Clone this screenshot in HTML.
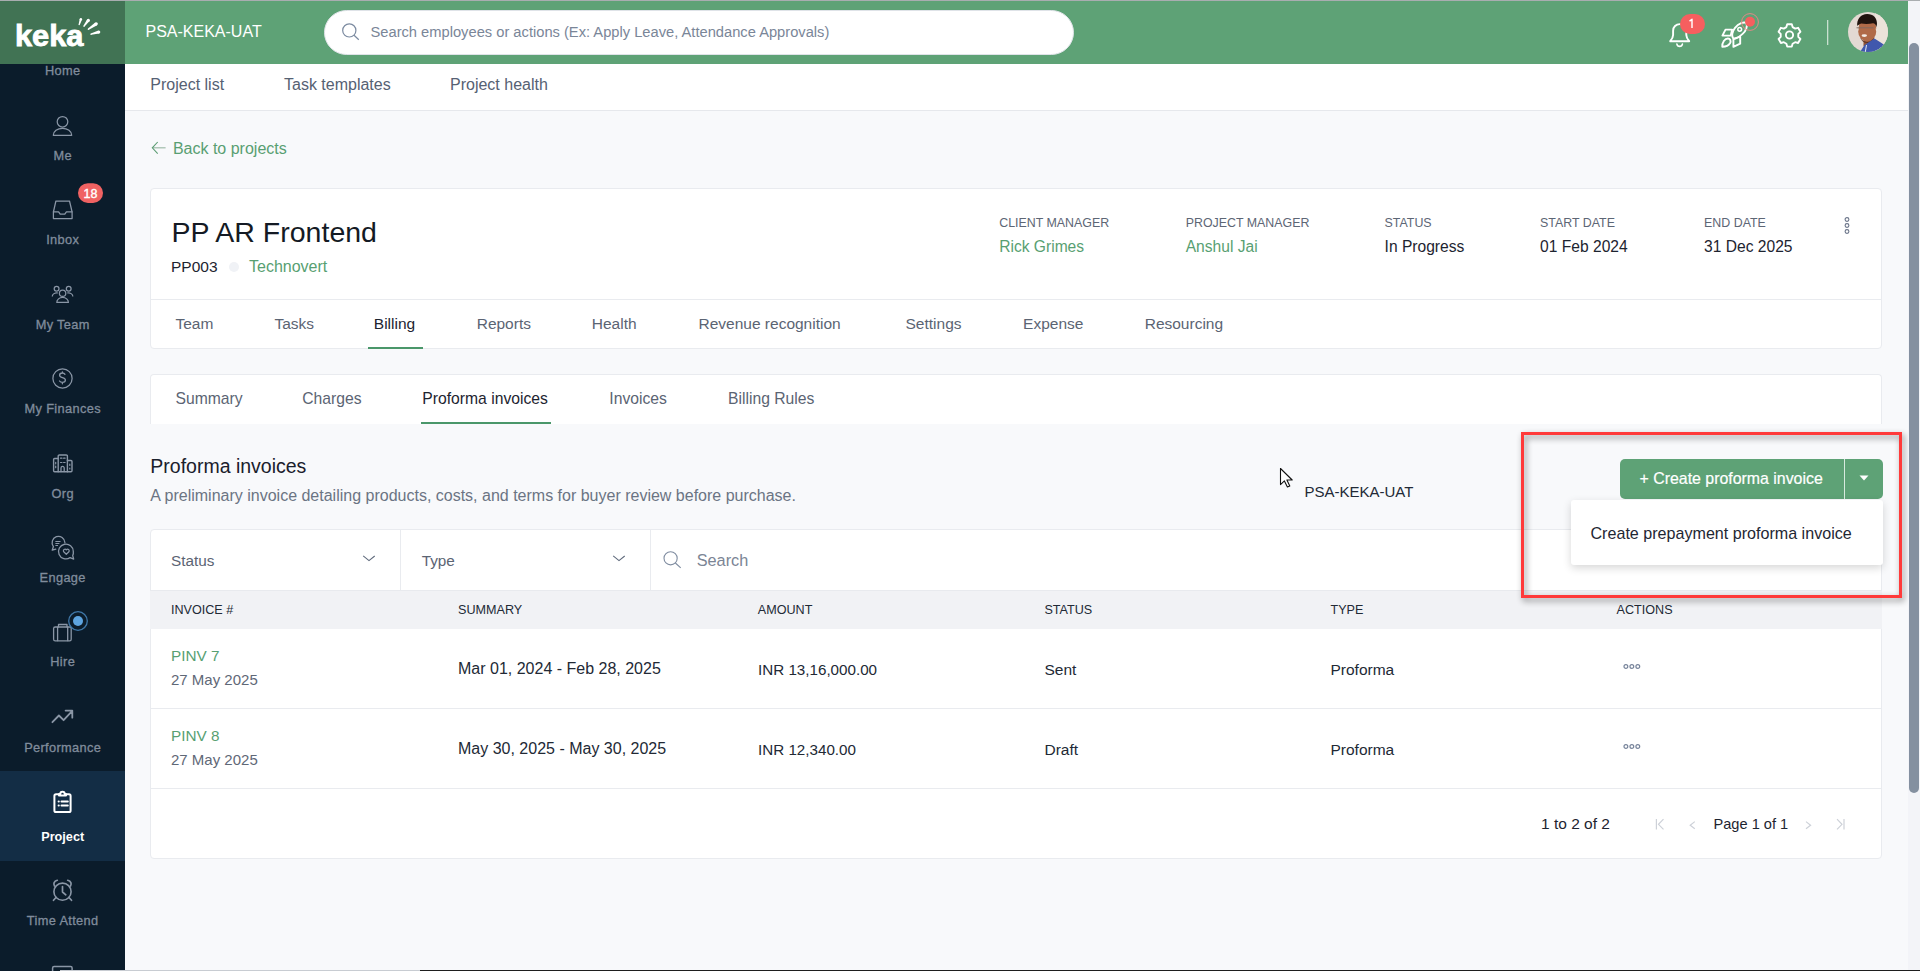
<!DOCTYPE html>
<html><head><meta charset="utf-8"><title>Keka PSA</title>
<style>
html,body{margin:0;padding:0;width:1920px;height:971px;overflow:hidden;background:#f8f9fb;font-family:"Liberation Sans", sans-serif}
.t{position:absolute;white-space:nowrap;font-family:"Liberation Sans", sans-serif}
.b{position:absolute;box-sizing:border-box}
svg.b{overflow:visible}
</style></head><body>
<div class="b" style="left:125px;top:64px;width:1783px;height:907px;background:#f8f9fb"></div>
<div class="b" style="left:125px;top:64px;width:1783px;height:47px;background:#fff;border-bottom:1px solid #e6e8ec"></div>
<span class="t" style="left:150.3px;top:76.90px;font-size:16px;line-height:16px;color:#566173;font-weight:400;">Project list</span>
<span class="t" style="left:284.0px;top:76.90px;font-size:16px;line-height:16px;color:#566173;font-weight:400;">Task templates</span>
<span class="t" style="left:450.0px;top:76.90px;font-size:16px;line-height:16px;color:#566173;font-weight:400;">Project health</span>
<svg class="b" style="left:150px;top:140px" width="18" height="16" viewBox="0 0 18 16"><path d="M15.6 7.8H3" fill="none" stroke="#9fbcaa" stroke-width="1.2"/><path d="M7.7 2L2.3 7.8l5.4 5.8" fill="none" stroke="#5b9c72" stroke-width="1.1"/></svg>
<span class="t" style="left:172.9px;top:140.70px;font-size:16px;line-height:16px;color:#589f72;font-weight:400;">Back to projects</span>
<div class="b" style="left:150px;top:188px;width:1732px;height:161px;background:#fff;border:1px solid #e9ebef;border-radius:4px"></div>
<div class="b" style="left:151px;top:299px;width:1730px;height:1px;background:#e9ebef"></div>
<span class="t" style="left:171.5px;top:217.88px;font-size:28.5px;line-height:28.5px;color:#141a24;font-weight:400;">PP AR Frontend</span>
<span class="t" style="left:171.0px;top:259.12px;font-size:15.5px;line-height:15.5px;color:#1d2430;font-weight:400;">PP003</span>
<div class="b" style="left:229px;top:261.5px;width:10px;height:10px;background:#f0f2f6;border-radius:50%"></div>
<span class="t" style="left:249.0px;top:258.70px;font-size:16px;line-height:16px;color:#589f72;font-weight:400;">Technovert</span>
<span class="t" style="left:999.2px;top:216.66px;font-size:12.4px;line-height:12.4px;color:#5d6675;font-weight:400;">CLIENT MANAGER</span>
<span class="t" style="left:999.2px;top:238.74px;font-size:15.6px;line-height:15.6px;color:#589f72;font-weight:400;">Rick Grimes</span>
<span class="t" style="left:1185.7px;top:216.66px;font-size:12.4px;line-height:12.4px;color:#5d6675;font-weight:400;">PROJECT MANAGER</span>
<span class="t" style="left:1185.7px;top:238.74px;font-size:15.6px;line-height:15.6px;color:#589f72;font-weight:400;">Anshul Jai</span>
<span class="t" style="left:1384.6px;top:216.66px;font-size:12.4px;line-height:12.4px;color:#5d6675;font-weight:400;">STATUS</span>
<span class="t" style="left:1384.6px;top:238.74px;font-size:15.6px;line-height:15.6px;color:#1d2430;font-weight:400;">In Progress</span>
<span class="t" style="left:1540.1px;top:216.66px;font-size:12.4px;line-height:12.4px;color:#5d6675;font-weight:400;">START DATE</span>
<span class="t" style="left:1540.1px;top:238.74px;font-size:15.6px;line-height:15.6px;color:#1d2430;font-weight:400;">01 Feb 2024</span>
<span class="t" style="left:1704.1px;top:216.66px;font-size:12.4px;line-height:12.4px;color:#5d6675;font-weight:400;">END DATE</span>
<span class="t" style="left:1704.1px;top:238.74px;font-size:15.6px;line-height:15.6px;color:#1d2430;font-weight:400;">31 Dec 2025</span>
<svg class="b" style="left:1842px;top:216px" width="10" height="20" viewBox="0 0 10 20"><circle cx="5" cy="3.5" r="1.9" fill="none" stroke="#6a7489" stroke-width="1.1"/><circle cx="5" cy="9.5" r="1.9" fill="none" stroke="#6a7489" stroke-width="1.1"/><circle cx="5" cy="15.5" r="1.9" fill="none" stroke="#6a7489" stroke-width="1.1"/></svg>
<span class="t" style="left:175.5px;top:315.72px;font-size:15.5px;line-height:15.5px;color:#5b6473;font-weight:400;">Team</span>
<span class="t" style="left:274.5px;top:315.72px;font-size:15.5px;line-height:15.5px;color:#5b6473;font-weight:400;">Tasks</span>
<span class="t" style="left:373.8px;top:315.72px;font-size:15.5px;line-height:15.5px;color:#1d2430;font-weight:400;">Billing</span>
<span class="t" style="left:476.7px;top:315.72px;font-size:15.5px;line-height:15.5px;color:#5b6473;font-weight:400;">Reports</span>
<span class="t" style="left:591.8px;top:315.72px;font-size:15.5px;line-height:15.5px;color:#5b6473;font-weight:400;">Health</span>
<span class="t" style="left:698.5px;top:315.72px;font-size:15.5px;line-height:15.5px;color:#5b6473;font-weight:400;">Revenue recognition</span>
<span class="t" style="left:905.5px;top:315.72px;font-size:15.5px;line-height:15.5px;color:#5b6473;font-weight:400;">Settings</span>
<span class="t" style="left:1023.1px;top:315.72px;font-size:15.5px;line-height:15.5px;color:#5b6473;font-weight:400;">Expense</span>
<span class="t" style="left:1144.7px;top:315.72px;font-size:15.5px;line-height:15.5px;color:#5b6473;font-weight:400;">Resourcing</span>
<div class="b" style="left:368px;top:347px;width:55px;height:2px;background:#4a976a"></div>
<div class="b" style="left:150px;top:374px;width:1732px;height:50px;background:#fff;border:1px solid #e9ebef;border-bottom:none;border-radius:4px 4px 0 0"></div>
<span class="t" style="left:175.5px;top:390.75px;font-size:15.7px;line-height:15.7px;color:#5b6473;font-weight:400;">Summary</span>
<span class="t" style="left:302.2px;top:390.75px;font-size:15.7px;line-height:15.7px;color:#5b6473;font-weight:400;">Charges</span>
<span class="t" style="left:422.3px;top:390.75px;font-size:15.7px;line-height:15.7px;color:#1d2430;font-weight:400;">Proforma invoices</span>
<span class="t" style="left:609.3px;top:390.75px;font-size:15.7px;line-height:15.7px;color:#5b6473;font-weight:400;">Invoices</span>
<span class="t" style="left:728.0px;top:390.75px;font-size:15.7px;line-height:15.7px;color:#5b6473;font-weight:400;">Billing Rules</span>
<div class="b" style="left:421px;top:422px;width:130px;height:2px;background:#4a976a"></div>
<span class="t" style="left:150.3px;top:457.43px;font-size:19.5px;line-height:19.5px;color:#1a202b;font-weight:400;">Proforma invoices</span>
<span class="t" style="left:150.3px;top:488.00px;font-size:16px;line-height:16px;color:#6b7483;font-weight:400;">A preliminary invoice detailing products, costs, and terms for buyer review before purchase.</span>
<div class="b" style="left:150px;top:529px;width:1732px;height:330px;background:#fff;border:1px solid #e9ebef;border-radius:4px"></div>
<div class="b" style="left:400px;top:530px;width:1px;height:60px;background:#e9ebef"></div>
<div class="b" style="left:650px;top:530px;width:1px;height:60px;background:#e9ebef"></div>
<span class="t" style="left:171.0px;top:552.70px;font-size:15.3px;line-height:15.3px;color:#5b6473;font-weight:400;">Status</span>
<span class="t" style="left:421.7px;top:552.70px;font-size:15.3px;line-height:15.3px;color:#5b6473;font-weight:400;">Type</span>
<svg class="b" style="left:362px;top:553px" width="14" height="10" viewBox="0 0 14 10"><path d="M1.2 2.9L7 7.6l5.7-4.6" fill="none" stroke="#5f6a7c" stroke-width="1.1"/></svg>
<svg class="b" style="left:612px;top:553px" width="14" height="10" viewBox="0 0 14 10"><path d="M1.2 2.9L7 7.6l5.7-4.6" fill="none" stroke="#5f6a7c" stroke-width="1.1"/></svg>
<svg class="b" style="left:661px;top:550px" width="22" height="20" viewBox="0 0 22 20"><circle cx="9.6" cy="8.3" r="6.6" fill="none" stroke="#7f8ca0" stroke-width="1.1"/><path d="M14.4 13l5.3 4.8" stroke="#7f8ca0" stroke-width="1.1"/></svg>
<span class="t" style="left:696.7px;top:552.14px;font-size:16.3px;line-height:16.3px;color:#7b8595;font-weight:400;">Search</span>
<div class="b" style="left:150px;top:590px;width:1732px;height:39px;background:#f1f2f5;border-top:1px solid #e8eaee"></div>
<span class="t" style="left:170.9px;top:603.89px;font-size:12.6px;line-height:12.6px;color:#222a36;font-weight:400;">INVOICE #</span>
<span class="t" style="left:458.0px;top:603.89px;font-size:12.6px;line-height:12.6px;color:#222a36;font-weight:400;">SUMMARY</span>
<span class="t" style="left:757.8px;top:603.89px;font-size:12.6px;line-height:12.6px;color:#222a36;font-weight:400;">AMOUNT</span>
<span class="t" style="left:1044.4px;top:603.89px;font-size:12.6px;line-height:12.6px;color:#222a36;font-weight:400;">STATUS</span>
<span class="t" style="left:1330.5px;top:603.89px;font-size:12.6px;line-height:12.6px;color:#222a36;font-weight:400;">TYPE</span>
<span class="t" style="left:1616.6px;top:603.89px;font-size:12.6px;line-height:12.6px;color:#222a36;font-weight:400;">ACTIONS</span>
<div class="b" style="left:151px;top:708px;width:1730px;height:1px;background:#e9ebef"></div>
<div class="b" style="left:151px;top:788px;width:1730px;height:1px;background:#e9ebef"></div>
<span class="t" style="left:171.0px;top:648.29px;font-size:15.3px;line-height:15.3px;color:#589f72;font-weight:400;">PINV 7</span>
<span class="t" style="left:171.0px;top:672.45px;font-size:15px;line-height:15px;color:#5f6877;font-weight:400;">27 May 2025</span>
<span class="t" style="left:458.0px;top:661.30px;font-size:16px;line-height:16px;color:#222935;font-weight:400;">Mar 01, 2024 - Feb 28, 2025</span>
<span class="t" style="left:758.0px;top:661.98px;font-size:15.2px;line-height:15.2px;color:#222935;font-weight:400;">INR 13,16,000.00</span>
<span class="t" style="left:1044.5px;top:661.73px;font-size:15.5px;line-height:15.5px;color:#222935;font-weight:400;">Sent</span>
<span class="t" style="left:1330.5px;top:661.73px;font-size:15.5px;line-height:15.5px;color:#222935;font-weight:400;">Proforma</span>
<svg class="b" style="left:1622px;top:661px" width="20" height="10" viewBox="0 0 20 10"><circle cx="3.9" cy="5.5" r="1.9" fill="none" stroke="#76839a" stroke-width="1.2"/><circle cx="9.85" cy="5.5" r="1.9" fill="none" stroke="#76839a" stroke-width="1.2"/><circle cx="15.8" cy="5.5" r="1.9" fill="none" stroke="#76839a" stroke-width="1.2"/></svg>
<span class="t" style="left:171.0px;top:728.29px;font-size:15.3px;line-height:15.3px;color:#589f72;font-weight:400;">PINV 8</span>
<span class="t" style="left:171.0px;top:752.45px;font-size:15px;line-height:15px;color:#5f6877;font-weight:400;">27 May 2025</span>
<span class="t" style="left:458.0px;top:741.30px;font-size:16px;line-height:16px;color:#222935;font-weight:400;">May 30, 2025 - May 30, 2025</span>
<span class="t" style="left:758.0px;top:741.98px;font-size:15.2px;line-height:15.2px;color:#222935;font-weight:400;">INR 12,340.00</span>
<span class="t" style="left:1044.5px;top:741.73px;font-size:15.5px;line-height:15.5px;color:#222935;font-weight:400;">Draft</span>
<span class="t" style="left:1330.5px;top:741.73px;font-size:15.5px;line-height:15.5px;color:#222935;font-weight:400;">Proforma</span>
<svg class="b" style="left:1622px;top:741px" width="20" height="10" viewBox="0 0 20 10"><circle cx="3.9" cy="5.5" r="1.9" fill="none" stroke="#76839a" stroke-width="1.2"/><circle cx="9.85" cy="5.5" r="1.9" fill="none" stroke="#76839a" stroke-width="1.2"/><circle cx="15.8" cy="5.5" r="1.9" fill="none" stroke="#76839a" stroke-width="1.2"/></svg>
<span class="t" style="left:1541.0px;top:815.73px;font-size:15.5px;line-height:15.5px;color:#1d2430;font-weight:400;">1 to 2 of 2</span>
<span class="t" style="left:1713.5px;top:817.09px;font-size:14.6px;line-height:14.6px;color:#1d2430;font-weight:400;">Page 1 of 1</span>
<svg class="b" style="left:1650px;top:814px" width="200" height="18" viewBox="0 0 200 18"><g fill="none" stroke="#cdd1d8" stroke-width="1.2"><path d="M6.4 5v10.6M13.5 5.2L8.5 10.3l5 5.1"/><path d="M44.8 7.6l-4.6 3.6 4.6 3.6"/><path d="M156 7.6l4.6 3.6-4.6 3.6"/><path d="M187 5.2l5 5.1-5 5.1M194 5v10.6"/></g></svg>
<span class="t" style="left:1304.5px;top:484.25px;font-size:15px;line-height:15px;color:#222a36;font-weight:400;">PSA-KEKA-UAT</span>
<svg class="b" style="left:1270px;top:460px" width="30" height="34" viewBox="1270 460 30 34"><path d="M1280.5 468.5V484.6l3.9-3.7 3 6 2.4-1-2.9-5.9h5.3z" fill="#fff" stroke="#111" stroke-width="1.1" stroke-linejoin="round"/></svg>
<div class="b" style="left:1620px;top:459px;width:263px;height:40px;background:#5ea276;border-radius:5px"></div>
<div class="b" style="left:1844px;top:459px;width:1.2px;height:40px;background:#d8eadf"></div>
<span class="t" style="left:1639.5px;top:471.09px;font-size:15.9px;line-height:15.9px;color:#fff;font-weight:400;-webkit-text-stroke:0.2px #fff">+ Create proforma invoice</span>
<svg class="b" style="left:1858px;top:474px" width="12" height="8" viewBox="0 0 12 8"><path d="M1.5 1.5h9L6 6.5z" fill="#fff"/></svg>
<div class="b" style="left:1571px;top:500px;width:312px;height:65px;background:#fff;border-radius:3px;box-shadow:0 3px 8px rgba(0,0,0,0.16)"></div>
<span class="t" style="left:1590.5px;top:524.62px;font-size:16.1px;line-height:16.1px;color:#1f2733;font-weight:400;">Create prepayment proforma invoice</span>
<div class="b" style="left:1521px;top:432px;width:381px;height:166px;border:3px solid #ff3a3a;filter:drop-shadow(2px 3px 3px rgba(0,0,0,0.45))"></div>
<div class="b" style="left:0px;top:0px;width:1908px;height:64px;background:#5ea276"></div>
<div class="b" style="left:0px;top:0px;width:125px;height:64px;background:#417354"></div>
<div class="b" style="left:0px;top:0px;width:1920px;height:1px;background:#a9adb0"></div>
<span class="t" style="left:145.5px;top:24.30px;font-size:16px;line-height:16px;color:#fff;font-weight:400;">PSA-KEKA-UAT</span>
<div class="b" style="left:324px;top:10px;width:750px;height:45px;background:#fff;border-radius:23px;border:1px solid #dfe3e8"></div>
<svg class="b" style="left:338px;top:19px" width="26" height="26" viewBox="0 0 26 26"><circle cx="11.3" cy="11.4" r="6.6" fill="none" stroke="#7b8aa0" stroke-width="1.2"/><path d="M16 16.2l4.8 4.6" stroke="#7b8aa0" stroke-width="1.2"/></svg>
<span class="t" style="left:370.5px;top:25.01px;font-size:14.7px;line-height:14.7px;color:#7a8698;font-weight:400;">Search employees or actions (Ex: Apply Leave, Attendance Approvals)</span>
<svg class="b" style="left:0;top:1px" width="125" height="63" viewBox="0 0 125 63">
<text x="15" y="44.8" style="font-family:'Liberation Sans';font-weight:700;font-size:29px" fill="#fff" stroke="#fff" stroke-width="0.8" textLength="68.5" lengthAdjust="spacingAndGlyphs">keka</text>
<g fill="#fff"><path d="M79.76 17.84L78.58 23.40L79.82 23.80L82.04 18.56z"/><circle cx="80.9" cy="18.2" r="1.20"/><circle cx="79.2" cy="23.6" r="0.65"/><path d="M87.19 18.31L83.44 24.79L84.56 25.61L89.61 20.09z"/><circle cx="88.4" cy="19.2" r="1.50"/><circle cx="84" cy="25.2" r="0.70"/><path d="M95.26 21.44L87.97 27.58L88.83 28.82L97.14 24.16z"/><circle cx="96.2" cy="22.8" r="1.65"/><circle cx="88.4" cy="28.2" r="0.75"/><path d="M98.39 29.56L90.81 32.53L91.19 33.87L99.21 32.44z"/><circle cx="98.8" cy="31" r="1.50"/><circle cx="91" cy="33.2" r="0.70"/></g></svg>
<svg class="b" style="left:1660px;top:12px" width="240" height="44" viewBox="1660 12 240 44">
<g fill="none" stroke="#fff" stroke-width="1.9" stroke-linejoin="round" stroke-linecap="round">
<path d="M1670.2 41.2h19c-1.6-1.9-2.9-3.6-2.9-6.2v-4.3a6.6 6.6 0 0 0-13.2 0v4.3c0 2.6-1.3 4.3-2.9 6.2z"/>
<path d="M1676.9 44.1a2.8 2.8 0 0 0 5.5 0" stroke-width="1.6"/>
<path d="M1733.2 38.2c-1.6-1.8-1.5-6.2 1.8-10.4 3.6-4.4 9-6.3 11.2-4.7 1.6 2 .3 7.4-3.6 10.8-3.7 3.3-7.8 5.8-9.4 4.3z"/>
<circle cx="1739.7" cy="29.3" r="1.9" stroke-width="1.5"/>
<path d="M1722.4 35.6l3.1-6h6.6l-1.4 6z"/>
<path d="M1733.4 46.8v-8l6.8-2.1v7z"/>
<path d="M1722.3 46.8c-.3-4.4 2.5-8.3 5.6-8.3 2.3 0 3.4 2.4 2.1 4.8-1.5 2.6-4.5 3.5-7.7 3.5z"/>
<circle cx="1789.5" cy="35" r="3.6"/>
<path d="M1787.2 24.2h4.6l.8 2.9 2.6 1.5 2.9-.8 2.3 4-2.1 2.1v3l2.1 2.1-2.3 4-2.9-.8-2.6 1.5-.8 2.9h-4.6l-.8-2.9-2.6-1.5-2.9.8-2.3-4 2.1-2.1v-3l-2.1-2.1 2.3-4 2.9.8 2.6-1.5z"/>
</g>
<rect x="1680" y="14" width="25" height="20" rx="10" fill="#f65f5f"/>
<path d="M1689.5 21.2l2.5-1.9v8.7" fill="none" stroke="#fff" stroke-width="1.45" stroke-linejoin="round"/>
<circle cx="1750" cy="22" r="8.4" fill="none" stroke="#e08a86" stroke-width="1"/>
<circle cx="1750" cy="21.7" r="5" fill="#f65f5f"/>
<rect x="1827" y="20" width="1.3" height="25" fill="#c9e0d0"/>
</svg>
<svg class="b" style="left:1848px;top:12px" width="40" height="40" viewBox="0 0 40 40">
<defs><clipPath id="av"><circle cx="20" cy="20" r="20"/></clipPath></defs>
<g clip-path="url(#av)">
<rect width="40" height="40" fill="#e3d9d3"/>
<rect x="27" y="0" width="13" height="40" fill="#ebe2d9"/>
<path d="M15.5 24h10l.5 9-5 4-5.5-3z" fill="#8f5234"/>
<ellipse cx="19.2" cy="19.8" rx="9" ry="9.6" fill="#b06a48"/><path d="M10.5 16.5L11.5 11h16l.8 5.5z" fill="#b06a48"/>
<path d="M12 25c2 4 5 5 7.5 5s5-1.5 7-5c-.5 3-3 6-7 6s-6.5-3-7.5-6z" fill="#5a3020"/>
<path d="M9.2 14C8.6 7 12.7 1.9 19.2 1.9 25.4 1.9 29.2 5.7 29 12.1L28.4 15.3C27.8 12.3 26.8 11.4 25 11.2 21.2 12.2 17 12.2 13.2 11.6 11.6 12.4 10 13 9.2 14z" fill="#20130e"/>
<path d="M8.5 15.8h17" stroke="#7d6a62" stroke-width="0.9"/>
<ellipse cx="16.3" cy="23.6" rx="2.7" ry="1.3" fill="#f4ece6"/>
<path d="M12 40l4.5-7 10-6.5 8.5 5.5 5 2v6z" fill="#4058ad"/>
<path d="M18.5 33l-1.2 7" stroke="#e6e9f3" stroke-width="1"/>
</g></svg>
<div class="b" style="left:1908px;top:1px;width:12px;height:970px;background:#f3f4f8"></div>
<div class="b" style="left:1909px;top:43px;width:10px;height:750px;background:#8490a0;border-radius:5px"></div>
<div class="b" style="left:0px;top:64px;width:125px;height:907px;background:#0b1c2b"></div>
<div class="b" style="left:0px;top:771px;width:125px;height:90px;background:#132d45"></div>
<span class="t" style="left:-87.3px;width:300px;text-align:center;top:65.22px;font-size:12.8px;line-height:12.8px;color:#808c9c;font-weight:400;letter-spacing:0.35px;-webkit-text-stroke:0.3px #808c9c">Home</span>
<span class="t" style="left:-87.3px;width:300px;text-align:center;top:149.72px;font-size:12.8px;line-height:12.8px;color:#808c9c;font-weight:400;letter-spacing:0.35px;-webkit-text-stroke:0.3px #808c9c">Me</span>
<span class="t" style="left:-87.3px;width:300px;text-align:center;top:233.92px;font-size:12.8px;line-height:12.8px;color:#808c9c;font-weight:400;letter-spacing:0.35px;-webkit-text-stroke:0.3px #808c9c">Inbox</span>
<span class="t" style="left:-87.3px;width:300px;text-align:center;top:319.12px;font-size:12.8px;line-height:12.8px;color:#808c9c;font-weight:400;letter-spacing:0.35px;-webkit-text-stroke:0.3px #808c9c">My Team</span>
<span class="t" style="left:-87.3px;width:300px;text-align:center;top:403.42px;font-size:12.8px;line-height:12.8px;color:#808c9c;font-weight:400;letter-spacing:0.35px;-webkit-text-stroke:0.3px #808c9c">My Finances</span>
<span class="t" style="left:-87.3px;width:300px;text-align:center;top:487.52px;font-size:12.8px;line-height:12.8px;color:#808c9c;font-weight:400;letter-spacing:0.35px;-webkit-text-stroke:0.3px #808c9c">Org</span>
<span class="t" style="left:-87.3px;width:300px;text-align:center;top:572.42px;font-size:12.8px;line-height:12.8px;color:#808c9c;font-weight:400;letter-spacing:0.35px;-webkit-text-stroke:0.3px #808c9c">Engage</span>
<span class="t" style="left:-87.3px;width:300px;text-align:center;top:656.42px;font-size:12.8px;line-height:12.8px;color:#808c9c;font-weight:400;letter-spacing:0.35px;-webkit-text-stroke:0.3px #808c9c">Hire</span>
<span class="t" style="left:-87.3px;width:300px;text-align:center;top:741.62px;font-size:12.8px;line-height:12.8px;color:#808c9c;font-weight:400;letter-spacing:0.35px;-webkit-text-stroke:0.3px #808c9c">Performance</span>
<span class="t" style="left:-87.3px;width:300px;text-align:center;top:831.21px;font-size:12.7px;line-height:12.7px;color:#fff;font-weight:700;">Project</span>
<span class="t" style="left:-87.3px;width:300px;text-align:center;top:915.12px;font-size:12.8px;line-height:12.8px;color:#808c9c;font-weight:400;letter-spacing:0.35px;-webkit-text-stroke:0.3px #808c9c">Time Attend</span>
<svg class="b" style="left:0;top:64px" width="125" height="907" viewBox="0 64 125 907">
<g fill="none" stroke="#8a96a6" stroke-width="1.25" stroke-linecap="round" stroke-linejoin="round">
<circle cx="62.5" cy="121.8" r="5.3"/>
<path d="M53.3 135.3a9.2 7 0 0 1 18.4 0z"/>
<path d="M55.9 201h13.6l2.6 11v6.5h-18.7v-6.5z"/>
<path d="M53.4 211.8h5.2l1.6 2.4h4.6l1.6-2.4h5.6"/>
<circle cx="56.6" cy="288.7" r="2.4"/><circle cx="68.7" cy="288.7" r="2.4"/><circle cx="62.6" cy="293.2" r="3.2"/>
<path d="M56.8 302.4a5.8 5 0 0 1 11.6 0z"/>
<path d="M52.3 296a4.6 3.4 0 0 1 5-3.1"/><path d="M72.8 296a4.6 3.4 0 0 0-5-3.1"/>
<circle cx="62.5" cy="378.4" r="9.6"/>
<path d="M65 374.3c-.6-.9-1.5-1.3-2.6-1.3-1.7 0-2.8.9-2.8 2.2 0 3 5.8 1.8 5.8 4.9 0 1.4-1.2 2.3-3 2.3-1.2 0-2.3-.5-2.9-1.4M62.4 371.8v1.2M62.4 382.4v1.4" stroke-width="1.3"/>
<path d="M58.2 471.8v-15.6a1.2 1.2 0 0 1 1.2-1.2h6.8a1.2 1.2 0 0 1 1.2 1.2v15.6" stroke-width="1.4"/>
<path d="M54.6 471.8h16.4a1 1 0 0 0 1-1v-9.3a1 1 0 0 0-1-1h-3.6M58.2 458.5h-3.6a1 1 0 0 0-1 1v11.3a1 1 0 0 0 1 1" stroke-width="1.4"/>
<path d="M60.5 458.2h1.5M63.6 458.2h1.5M60.5 462.5h1.5M63.6 462.5h1.5M55.7 462.3v1.5M55.7 466.2v1.5M69.8 464v1.5M69.8 468v1" stroke-width="1.2"/>
<path d="M61 471.6v-3.6a1.6 1.6 0 0 1 3.2 0v3.6" stroke-width="1.3"/>
<g transform="translate(0.3 1)"><path d="M64.6 541.5a6.4 6.4 0 1 0-11.5 4.1l-1.2 3.6 3.6-1" stroke-width="1.3"/>
<path d="M55.5 540.5h4.3M55.5 542.5h3.2M55.5 544.5h1.8" stroke-width="1.1"/>
<path d="M73 550.5a7.4 7.4 0 1 0-3.2 6.1l3.6 1.5-1-3.5a7.3 7.3 0 0 0 .6-4.1z" stroke-width="1.3"/>
<path d="M66 553.3l-2.6-2.5a1.6 1.6 0 0 1 2.6-1.9 1.6 1.6 0 0 1 2.6 1.9z" stroke-width="1.2"/></g>
<rect x="53.6" y="627" width="17.6" height="13.8" rx="1.6" stroke-width="1.3"/>
<path d="M58.5 626.9v-2.4h8.5v2.4M57.6 627.2v13.5M67.7 627.2v13.5" stroke-width="1.3"/>
<path d="M52.4 722.2l6.5-6.7 4.7 4.7 8.7-9.4M65.6 710.6h6.7v7.1" stroke-width="1.8"/>
<circle cx="62.5" cy="891.7" r="8.6" stroke-width="1.6"/>
<path d="M62.5 886.5v5.5l3.3 2.8M54.5 886c-1.4-2.5-.5-4.8 2.8-5.7M70.5 886c1.4-2.5.5-4.8-2.8-5.7M56 897.5l-2.5 2.8M69 897.5l2.5 2.8" stroke-width="1.7"/>
<rect x="52.6" y="966.5" width="19.5" height="12" rx="1.5" stroke-width="1.5"/>
</g>
<circle cx="78" cy="621" r="9.3" fill="none" stroke="#3f77a8" stroke-width="1.3"/>
<circle cx="78" cy="621" r="5" fill="#5da4e0"/>
<g fill="none" stroke="#fff" stroke-width="2" stroke-linecap="round" stroke-linejoin="round">
<path d="M58.2 794.3h-2.2a1.6 1.6 0 0 0-1.6 1.6v14.5a1.6 1.6 0 0 0 1.6 1.6h13a1.6 1.6 0 0 0 1.6-1.6v-14.5a1.6 1.6 0 0 0-1.6-1.6h-2.2"/>
<path d="M59 795.6h7v-1.6h-1.3a2.2 2.2 0 0 0-4.4 0h-1.3z"/>
<path d="M61.5 801.4h6.3M61.5 805.4h6.3M58.6 801.4h.2M58.6 805.4h.2"/>
</g>
<rect x="78" y="183.2" width="25" height="19.8" rx="9.9" fill="#f06262"/>
<text x="90.5" y="197.6" style="font-family:'Liberation Sans';font-size:12.5px;font-weight:400" fill="#fff" stroke="#fff" stroke-width="0.4" text-anchor="middle">18</text>
</svg>
<div class="b" style="left:60px;top:970px;width:360px;height:1px;background:#c8ccd2"></div>
<div class="b" style="left:420px;top:970px;width:1500px;height:1px;background:#1e1e1e"></div>
</body></html>
